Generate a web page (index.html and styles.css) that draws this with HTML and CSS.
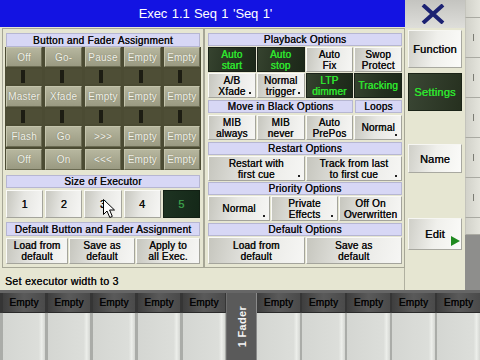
FILE: index.html
```html
<!DOCTYPE html>
<html>
<head>
<meta charset="utf-8">
<link rel="stylesheet" href="styles.css">
</head>
<body>
<div class="screen">
  <div class="top">
    <div class="main">
      <div class="title">Exec 1.1 Seq 1 'Seq 1'</div>
      <div class="panels">
        <div class="panel left">
          <div class="hdr h14">Button and Fader Assignment</div>
          <div class="assign">
            <div class="gbtn">Off</div><div class="gbtn">Go-</div><div class="gbtn">Pause</div><div class="gbtn">Empty</div><div class="gbtn">Empty</div>
            <div class="fader"></div><div class="fader"></div><div class="fader"></div><div class="fader"></div><div class="fader"></div>
            <div class="gbtn">Master</div><div class="gbtn">Xfade</div><div class="gbtn">Empty</div><div class="gbtn">Empty</div><div class="gbtn">Empty</div>
            <div class="fader"></div><div class="fader"></div><div class="fader"></div><div class="fader"></div><div class="fader"></div>
            <div class="gbtn">Flash</div><div class="gbtn">Go</div><div class="gbtn">&gt;&gt;&gt;</div><div class="gbtn">Empty</div><div class="gbtn">Empty</div>
            <div class="gbtn">Off</div><div class="gbtn">On</div><div class="gbtn">&lt;&lt;&lt;</div><div class="gbtn">Empty</div><div class="gbtn">Empty</div>
          </div>
          <div class="hdr mt5">Size of Executor</div>
          <div class="sizes">
            <div class="btn big">1</div><div class="btn big">2</div><div class="btn big">3</div><div class="btn big">4</div><div class="btn big sel">5</div>
          </div>
          <div class="hdr h14 mt4">Default Button and Fader Assignment</div>
          <div class="defrow">
            <div class="btn">Load from<br>default</div><div class="btn">Save as<br>default</div><div class="btn">Apply to<br>all Exec.</div>
          </div>
        </div>
        <div class="panel mid">
          <div class="hdr">Playback Options</div>
          <div class="row4 mt1">
            <div class="btn on">Auto<br>start</div><div class="btn on">Auto<br>stop</div><div class="btn">Auto<br>Fix</div><div class="btn">Swop<br>Protect</div>
          </div>
          <div class="row4 mt1">
            <div class="btn dd">A/B<br>Xfade</div><div class="btn dd">Normal<br>trigger</div><div class="btn on">LTP<br>dimmer</div><div class="btn on">Tracking</div>
          </div>
          <div class="row4 hrow mt2">
            <div class="hdr span3">Move in Black Options</div><div class="hdr">Loops</div>
          </div>
          <div class="row4 mt2">
            <div class="btn">MIB<br>always</div><div class="btn">MIB<br>never</div><div class="btn">Auto<br>PrePos</div><div class="btn dd">Normal</div>
          </div>
          <div class="hdr mt2">Restart Options</div>
          <div class="row2 mt1">
            <div class="btn dd">Restart with<br>first cue</div><div class="btn dd">Track from last<br>to first cue</div>
          </div>
          <div class="hdr mt1">Priority Options</div>
          <div class="row3 mt1">
            <div class="btn dd">Normal</div><div class="btn dd">Private<br>Effects</div><div class="btn">Off On<br>Overwritten</div>
          </div>
          <div class="hdr mt2">Default Options</div>
          <div class="row2 last mt1">
            <div class="btn">Load from<br>default</div><div class="btn">Save as<br>default</div>
          </div>
        </div>
      </div>
      <div class="status">Set executor width to 3</div>
    </div>
    <div class="side">
      <div class="xbox">
        <svg width="24" height="20" viewBox="0 0 24 20"><path d="M2 1 L22 19 M22 1 L2 19" stroke="#1c2272" stroke-width="4" stroke-linecap="butt"/></svg>
      </div>
      <div class="sbtn s-function">Function</div>
      <div class="sbtn s-settings">Settings</div>
      <div class="sbtn s-name">Name</div>
      <div class="sbtn s-edit">Edit<span class="tri"></span></div>
    </div>
    <div class="edge">
      <div class="ebox e0"></div>
      <div class="ebox"><i></i></div>
      <div class="ebox"><i></i></div>
      <div class="ebox"><i></i></div>
      <div class="ebox"><i></i></div>
      <div class="ebox"><i></i></div>
      <div class="ebox e7"></div>
      <div class="egray"></div>
    </div>
  </div>
  <div class="bottom">
    <div class="group gl">
      <div class="cell"><div class="ch">Empty</div><div class="cb"></div></div>
      <div class="cell"><div class="ch">Empty</div><div class="cb"></div></div>
      <div class="cell"><div class="ch">Empty</div><div class="cb"></div></div>
      <div class="cell"><div class="ch">Empty</div><div class="cb"></div></div>
      <div class="cell"><div class="ch">Empty</div><div class="cb"></div></div>
    </div>
    <div class="faderbar"><span>1 Fader</span></div>
    <div class="group gr">
      <div class="cell"><div class="ch">Empty</div><div class="cb"></div></div>
      <div class="cell"><div class="ch">Empty</div><div class="cb"></div></div>
      <div class="cell"><div class="ch">Empty</div><div class="cb"></div></div>
      <div class="cell"><div class="ch">Empty</div><div class="cb"></div></div>
      <div class="cell"><div class="ch">Empty</div><div class="cb"></div></div>
    </div>
  </div>
  <svg class="cursor" width="13" height="20" viewBox="0 0 13 20"><path d="M0.5 0.5 L0.5 15.5 L4 12 L6.8 18.5 L9.3 17.4 L6.6 11 L11.5 11 Z" fill="#fff" stroke="#000" stroke-width="1"/></svg>
</div>
</body>
</html>
```

FILE: styles.css
```css
* { box-sizing: border-box; }
html, body { margin: 0; padding: 0; }
body {
  width: 480px;
  height: 360px;
  overflow: hidden;
  font-family: "Liberation Sans", Arial, sans-serif;
  font-size: 10px;
  color: #0c0c0c;
  background: #e6e6d2;
}
.screen {
  position: relative;
  width: 480px;
  height: 360px;
  display: flex;
  flex-direction: column;
}
.top { display: flex; height: 290px; }
.main { width: 405px; display: flex; flex-direction: column; }
.title {
  height: 27px;
  background: #1313e2;
  color: #fff;
  font-size: 13px;
  letter-spacing: -0.1px;
  word-spacing: 1px;
  display: flex;
  align-items: center;
  justify-content: center;
  padding-left: 6px;
}
.panels { display: flex; height: 241px; padding: 1px 0 0 2px; }
.panel {
  border: 1px solid #a6a696;
  padding: 4px 3px 3px;
  display: flex;
  flex-direction: column;
  height: 240px;
}
.panel.left { width: 202px; }
.panel.mid { width: 201px; padding-right: 2px; }

.hdr {
  height: 13px;
  background: #d7d7f5;
  border: 1px solid #b6b6d2;
  display: flex;
  align-items: center;
  justify-content: center;
  letter-spacing: 0.3px;
  white-space: nowrap;
  text-shadow: 0.3px 0 0 #0c0c0c;
}
.h14 { height: 14px; }
.mt1 { margin-top: 1px; }
.mt2 { margin-top: 2px; }
.mt4 { margin-top: 4px; }
.mt5 { margin-top: 5px; }

.assign {
  height: 123px;
  margin: 0 -1px;
  display: grid;
  grid-template-columns: repeat(5, 1fr);
  grid-template-rows: 20px 15px 21px 15px 21px 21px;
  gap: 2px 3px;
  background: #4b4b33;
  padding: 0 1px;
}
.gbtn {
  background: linear-gradient(#b6b69e, #9a9a82);
  color: #f2f2ea;
  border: 1px solid #c4c4ac;
  border-right-color: #6a6a52;
  border-bottom-color: #6a6a52;
  display: flex;
  align-items: center;
  justify-content: center;
  letter-spacing: 0.2px;
  text-shadow: 0 0 1px #707058;
}
.fader {
  display: flex;
  align-items: center;
  justify-content: center;
  background: #4e4e36;
}
.fader::before {
  content: "";
  width: 4px;
  height: 13px;
  background: #1d1d13;
  margin-right: 3px;
}

.btn {
  position: relative;
  background: linear-gradient(100deg, #c6c6be 0%, #e6e6e2 45%, #f6f6f4 100%);
  border: 1px solid #fafaf8;
  border-right-color: #a4a49c;
  border-bottom-color: #a4a49c;
  display: flex;
  align-items: center;
  justify-content: center;
  text-align: center;
  line-height: 11px;
  letter-spacing: 0.2px;
  white-space: nowrap;
  text-shadow: 0.3px 0 0 currentColor;
}
.btn.big { font-size: 11px; }
.btn.on {
  background: linear-gradient(100deg, #36432f 0%, #24301f 60%, #1c2819 100%);
  border-color: #1a2218;
  color: #2ee42e;
}
.btn.sel {
  background: linear-gradient(100deg, #1e3322, #142818);
  border-color: #122014;
  color: #3a9a48;
}
.btn.dd::after {
  content: "";
  position: absolute;
  right: 4px;
  bottom: 3px;
  width: 2px;
  height: 2px;
  background: #222;
}

.sizes {
  height: 28px;
  margin-top: 2px;
  display: grid;
  grid-template-columns: repeat(5, 1fr);
  gap: 2px;
}
.defrow {
  height: 26px;
  margin-top: 2px;
  display: grid;
  grid-template-columns: 62fr 66fr 64fr;
  gap: 1px;
}

.row4 {
  height: 25px;
  display: grid;
  grid-template-columns: repeat(4, 1fr);
  gap: 1px;
}
.row4.hrow { height: 13px; gap: 2px; }
.span3 { grid-column: span 3; }
.row2 {
  height: 25px;
  display: grid;
  grid-template-columns: 1fr 1fr;
  gap: 1px;
}
.row2.last { height: 27px; }
.row3 {
  height: 25px;
  display: grid;
  grid-template-columns: 62fr 67fr 63fr;
  gap: 1px;
}

.status {
  height: 22px;
  display: flex;
  align-items: center;
  padding: 3px 0 0 5px;
  font-size: 10.5px;
  letter-spacing: 0.3px;
  border-right: 1px solid #b0b0a0;
  text-shadow: 0.3px 0 0 #0c0c0c;
}

.side {
  width: 60px;
  display: flex;
  flex-direction: column;
}
.xbox {
  height: 28px;
  background: linear-gradient(#c4c4c0, #dededa);
  display: flex;
  align-items: center;
  justify-content: center;
  padding-right: 4px;
}
.sbtn {
  position: relative;
  margin-left: 3px;
  width: 54px;
  display: flex;
  align-items: center;
  justify-content: center;
  font-size: 11px;
  letter-spacing: 0.2px;
  text-shadow: 0.3px 0 0 currentColor;
  background: linear-gradient(100deg, #cfcfc8 0%, #f0f0ec 50%, #fbfbf9 100%);
  border: 1px solid #f6f6f2;
  border-right-color: #a8a8a0;
  border-bottom-color: #a8a8a0;
}
.s-function { height: 38px; margin-top: 2px; }
.s-settings {
  height: 38px;
  margin-top: 5px;
  background: linear-gradient(100deg, #3a4634, #26301f);
  border-color: #1c2418;
  color: #2ee22e;
}
.s-name { height: 29px; margin-top: 33px; }
.s-edit { height: 32px; margin-top: 45px; }
.tri {
  position: absolute;
  right: 1px;
  bottom: 3px;
  width: 0;
  height: 0;
  border-top: 5px solid transparent;
  border-bottom: 5px solid transparent;
  border-left: 9px solid #1f8a1f;
}

.edge {
  width: 15px;
  display: flex;
  flex-direction: column;
  background: #dadad2;
}
.ebox {
  height: 40px;
  border-left: 1px solid #c4c4bc;
  border-bottom: 1px solid #aaaaa2;
  display: flex;
  align-items: center;
  justify-content: center;
  background: linear-gradient(90deg, #d2d2ca, #e4e4dc);
}
.ebox.e0 { height: 18px; }
.ebox.e7 { height: 17px; }
.ebox i {
  display: block;
  width: 1px;
  height: 7px;
  background: #7c7c74;
}
.egray { flex: 1; background: #8e8e8c; }

.bottom {
  height: 70px;
  display: flex;
  background: #4a4a4a;
  border-top: 3px solid #666;
}
.group {
  display: flex;
  background: linear-gradient(#353535 0, #353535 20px, #aaaca8 20px);
}
.gl { padding-left: 3px; gap: 3px; width: 226px; }
.gr { gap: 2px; flex: 1; }
.cell { display: flex; flex-direction: column; width: 42px; }
.gr .cell { width: 43px; }
.ch {
  height: 20px;
  background: linear-gradient(90deg, #3e3e3e 0%, #5a5a5a 50%, #4a4a4a 100%);
  color: #050505;
  display: flex;
  align-items: center;
  justify-content: center;
  font-size: 10px;
  letter-spacing: 0.2px;
  text-shadow: 0.3px 0 0 #050505;
  border-bottom: 1px solid #2a2a2a;
}
.cb {
  flex: 1;
  background: linear-gradient(90deg, #d4d6d2 0%, #dcdeda 85%, #eceeea 92%, #d4d6d2 100%);
}
.faderbar {
  width: 31px;
  background: #5a5a5a;
  border-left: 1px solid #6e6e6e;
  border-right: 1px solid #8a8a8a;
  display: flex;
  align-items: center;
  justify-content: center;
}
.faderbar span {
  writing-mode: vertical-rl;
  transform: rotate(180deg);
  color: #f4f4f4;
  font-size: 11px;
  font-weight: bold;
  letter-spacing: 0.3px;
}
.cursor {
  position: absolute;
  left: 103px;
  top: 199px;
}
```
